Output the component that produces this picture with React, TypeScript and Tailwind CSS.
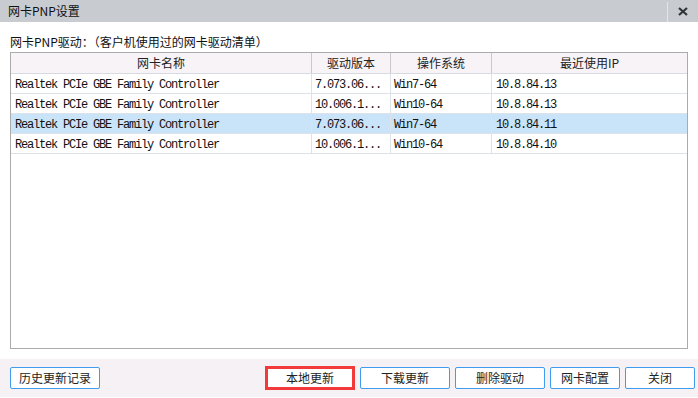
import React from "react";

const rows = [
  { name: "Realtek PCIe GBE Family Controller", ver: "7.073.06...", os: "Win7-64", ip: "10.8.84.13", sel: false },
  { name: "Realtek PCIe GBE Family Controller", ver: "10.006.1...", os: "Win10-64", ip: "10.8.84.13", sel: false },
  { name: "Realtek PCIe GBE Family Controller", ver: "7.073.06...", os: "Win7-64", ip: "10.8.84.11", sel: true },
  { name: "Realtek PCIe GBE Family Controller", ver: "10.006.1...", os: "Win10-64", ip: "10.8.84.10", sel: false },
];

const cjk = { fontFamily: '"Noto Sans CJK SC", "Noto Sans", sans-serif' };
const mono = { fontFamily: '"Liberation Mono", "DejaVu Sans Mono", monospace' };

function Btn({ label, w, red }: { label: string; w: string; red?: boolean }) {
  return (
    <button
      className={
        red
          ? `${w} h-[24px] border-[3px] border-[#f23a3a] bg-white text-[12px] text-[#222] flex items-center justify-center`
          : `${w} h-[22px] border border-[#3f9cee] rounded-[2px] bg-white text-[12px] text-[#222] flex items-center justify-center`
      }
      style={cjk}
    >
      {label}
    </button>
  );
}

export default function App() {
  return (
    <div className="w-[698px] h-[398px] bg-white flex flex-col overflow-hidden" style={cjk}>
      {/* title bar */}
      <div className="h-[22px] bg-[#c8ccd0] flex items-center shrink-0">
        <div className="pl-[8px] text-[12px] leading-[14px] text-[#111] flex-1">网卡PNP设置</div>
        <div className="w-px h-[20px] self-end bg-[#e2e5e7]" />
        <div className="w-[30px] h-full flex items-center justify-center">
          <svg width="10" height="9" viewBox="0 0 10 9">
            <path d="M1 1 L9 8 M9 1 L1 8" stroke="#2f3438" strokeWidth="2.2" strokeLinecap="butt" />
          </svg>
        </div>
      </div>

      {/* content */}
      <div className="px-[10px] flex flex-col shrink-0">
        <div className="pt-[13px] text-[12px] leading-[14px] text-[#111]">网卡PNP驱动：（客户机使用过的网卡驱动清单）</div>
        <div className="mt-[3px] w-[678px] h-[297px] border border-[#ababab] bg-white">
          <div className="grid grid-cols-[301px_79px_101px_195px] h-[21px] bg-[#f7f3f7] border-b border-[#d6dbe1] text-[12px] text-[#222]">
            <div className="border-r border-[#c9c9c9] flex items-center justify-center">网卡名称</div>
            <div className="border-r border-[#c9c9c9] flex items-center justify-center">驱动版本</div>
            <div className="border-r border-[#c9c9c9] flex items-center justify-center">操作系统</div>
            <div className="flex items-center justify-center">最近使用IP</div>
          </div>
          {rows.map((r, i) => (
            <div
              key={i}
              className={`grid grid-cols-[301px_79px_101px_195px] h-[20px] border-b border-[#dde2e8] text-[12px] tracking-[-1.2px] text-[#111] ${
                r.sel ? "bg-[#c9e3f9]" : "bg-white"
              }`}
              style={mono}
            >
              <div className="border-r border-[#dde2e8] flex items-center pt-[2px] pl-[4px] whitespace-nowrap">{r.name}</div>
              <div className="border-r border-[#dde2e8] flex items-center pt-[2px] pl-[3px] whitespace-nowrap">{r.ver}</div>
              <div className="border-r border-[#dde2e8] flex items-center pt-[2px] pl-[3px] whitespace-nowrap">{r.os}</div>
              <div className="flex items-center pt-[2px] pl-[4px] whitespace-nowrap">{r.ip}</div>
            </div>
          ))}
        </div>
      </div>

      {/* footer */}
      <div className="mt-[10px] h-[38px] bg-[#f5f1f5] flex items-center pl-[10px] pr-[3px] shrink-0">
        <Btn label="历史更新记录" w="w-[90px]" />
        <div className="ml-auto flex items-center gap-[5px]">
          <Btn label="本地更新" w="w-[90px]" red />
          <Btn label="下载更新" w="w-[90px]" />
          <Btn label="删除驱动" w="w-[90px]" />
          <Btn label="网卡配置" w="w-[70px]" />
          <Btn label="关闭" w="w-[70px]" />
        </div>
      </div>
    </div>
  );
}
